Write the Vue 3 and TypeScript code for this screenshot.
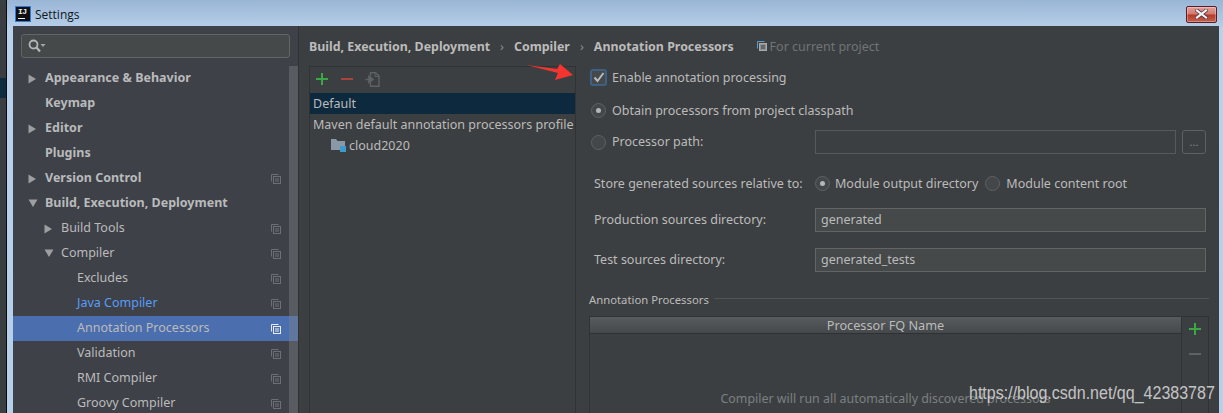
<script setup lang="ts">
interface TreeRow {
  label: string
  level: number
  arrow?: 'right' | 'down'
  bold?: boolean
  copy?: boolean
  link?: boolean
  selected?: boolean
}

const rows: TreeRow[] = [
  { label: 'Appearance & Behavior', level: 0, arrow: 'right', bold: true },
  { label: 'Keymap', level: 0, bold: true },
  { label: 'Editor', level: 0, arrow: 'right', bold: true },
  { label: 'Plugins', level: 0, bold: true },
  { label: 'Version Control', level: 0, arrow: 'right', bold: true, copy: true },
  { label: 'Build, Execution, Deployment', level: 0, arrow: 'down', bold: true },
  { label: 'Build Tools', level: 1, arrow: 'right', copy: true },
  { label: 'Compiler', level: 1, arrow: 'down', copy: true },
  { label: 'Excludes', level: 2, copy: true },
  { label: 'Java Compiler', level: 2, copy: true, link: true },
  { label: 'Annotation Processors', level: 2, copy: true, selected: true },
  { label: 'Validation', level: 2, copy: true },
  { label: 'RMI Compiler', level: 2, copy: true },
  { label: 'Groovy Compiler', level: 2, copy: true }
]
</script>

<template>
  <div class="screen">
    <div class="desk"><span class="desk-patch"></span></div>
    <div class="window">
      <header class="titlebar">
        <div class="logo"><span class="logo-text">IJ</span><span class="logo-bar"></span></div>
        <span class="title">Settings</span>
        <button class="close" type="button" aria-label="Close">
          <svg width="13" height="10" viewBox="0 0 13 10">
            <path d="M2 1.5 L11 8.5 M11 1.5 L2 8.5" stroke="#4a3a44" stroke-width="3.6" stroke-linecap="square" />
            <path d="M2 1.5 L11 8.5 M11 1.5 L2 8.5" stroke="#f4f4f6" stroke-width="2.2" stroke-linecap="square" />
          </svg>
        </button>
      </header>

      <div class="client">
        <aside class="sidebar">
          <div class="search-wrap">
            <div class="search">
              <svg width="20" height="16" viewBox="0 0 20 16">
                <circle cx="6.5" cy="6.5" r="4" fill="none" stroke="#b4b6b7" stroke-width="1.8" />
                <path d="M9.5 9.5 L13 13.5" stroke="#b4b6b7" stroke-width="2.2" />
                <path d="M13.5 6 H18.5 L16 9 Z" fill="#a3a5a6" />
              </svg>
            </div>
          </div>
          <div class="tree">
            <div
              v-for="row in rows"
              :key="row.label"
              class="tree-row"
              :class="['lvl-' + row.level, { selected: row.selected }]"
            >
              <span class="arrow-slot">
                <svg v-if="row.arrow === 'right'" width="9" height="10" viewBox="0 0 9 10"><path d="M0.5 0.5 L8 5 L0.5 9.5 Z" fill="#9c9e9f" /></svg>
                <svg v-else-if="row.arrow === 'down'" width="10" height="9" viewBox="0 0 10 9"><path d="M0.5 0.5 H9.5 L5 8 Z" fill="#9c9e9f" /></svg>
              </span>
              <span class="tree-label" :class="{ bold: row.bold, link: row.link }">{{ row.label }}</span>
              <svg v-if="row.copy" class="copy" width="10" height="10" viewBox="0 0 10 10">
                <g fill="none" :stroke="row.selected ? '#e6ebf4' : '#6d7073'" stroke-width="1">
                  <path d="M0.5 7.5 V0.5 H7.5" />
                  <rect x="2.5" y="2.5" width="7" height="7" />
                  <path d="M4 5 H8 M4 7 H8" />
                </g>
              </svg>
            </div>
            <div class="scrollbar"></div>
          </div>
        </aside>

        <main class="main">
          <nav class="crumbs">
            <span class="crumb">Build, Execution, Deployment</span>
            <span class="sep">›</span>
            <span class="crumb">Compiler</span>
            <span class="sep">›</span>
            <span class="crumb">Annotation Processors</span>
            <span class="scope">
              <svg width="10" height="10" viewBox="0 0 10 10">
                <path d="M0.5 7.5 V0.5 H7.5" fill="none" stroke="#5d9bd0" />
                <rect x="2.5" y="2.5" width="7" height="7" fill="#8d9093" stroke="#a8abad" />
                <path d="M4 5 H8 M4 7 H8" stroke="#3c3f41" />
              </svg>
              For current project
            </span>
          </nav>

          <div class="content">
            <section class="profiles">
              <div class="profile-tools">
                <svg width="12" height="12" viewBox="0 0 12 12"><path d="M6 0 V12 M0 6 H12" stroke="#3aa745" stroke-width="2" /></svg>
                <svg width="12" height="12" viewBox="0 0 12 12"><path d="M0 6 H12" stroke="#a8443c" stroke-width="2" /></svg>
                <svg width="15" height="15" viewBox="0 0 15 15">
                  <path d="M5.5 4.5 V0.8 H10.5 L14 4 V14.2 H5.5 V10.5" fill="none" stroke="#5f6264" stroke-width="1.4" />
                  <path d="M10 0.8 V4.5 H14" fill="none" stroke="#5f6264" />
                  <path d="M0.5 7.5 H5.5 M4 4.5 L8 7.5 L4 10.5 Z" fill="#5f6264" stroke="#5f6264" stroke-width="1.6" />
                </svg>
              </div>
              <div class="profile-row active">Default</div>
              <div class="profile-row">Maven default annotation processors profile</div>
              <div class="profile-row nested">
                <svg width="15" height="13" viewBox="0 0 15 13">
                  <path d="M0 0 H5 L6.5 2 H14 V11 H0 Z" fill="#8a98a7" />
                  <rect x="9" y="7" width="6" height="6" fill="#3d9bc9" />
                </svg>
                cloud2020
              </div>
            </section>

            <section class="form">
              <div class="line enable">
                <span class="checkbox">
                  <svg width="12" height="11" viewBox="0 0 12 11"><path d="M1.5 5.5 L4.5 9 L10.5 1" fill="none" stroke="#b9bbbc" stroke-width="2" /></svg>
                </span>
                <span class="txt">Enable annotation processing</span>
              </div>
              <div class="line obtain">
                <span class="radio on"></span>
                <span class="txt">Obtain processors from project classpath</span>
              </div>
              <div class="line path">
                <span class="radio"></span>
                <span class="txt path-label">Processor path:</span>
                <div class="field disabled"></div>
                <div class="browse">...</div>
              </div>
              <div class="line store">
                <span class="txt store-label">Store generated sources relative to:</span>
                <span class="radio on"></span>
                <span class="txt opt">Module output directory</span>
                <span class="radio"></span>
                <span class="txt">Module content root</span>
              </div>
              <div class="line prod">
                <span class="txt store-label">Production sources directory:</span>
                <div class="field wide">generated</div>
              </div>
              <div class="line test">
                <span class="txt store-label">Test sources directory:</span>
                <div class="field wide">generated_tests</div>
              </div>
              <div class="group">
                <span>Annotation Processors</span>
                <i class="rule"></i>
              </div>
              <div class="table">
                <div class="table-main">
                  <div class="table-head">Processor FQ Name</div>
                  <div class="table-hint">Compiler will run all automatically discovered processors</div>
                </div>
                <div class="table-tools">
                  <svg width="12" height="12" viewBox="0 0 12 12"><path d="M6 0 V12 M0 6 H12" stroke="#3aa745" stroke-width="2" /></svg>
                  <svg width="12" height="2" viewBox="0 0 12 2"><path d="M0 1 H12" stroke="#5f6264" stroke-width="2" /></svg>
                </div>
              </div>
            </section>
          </div>
        </main>
      </div>
    </div>

    <svg class="callout" width="50" height="20" viewBox="0 0 50 20">
      <path d="M0.5 1 L31 5 L34 0 L47 11 L29 16 L32 9 Z" fill="#f4342f" />
    </svg>
    <span class="watermark">https://blog.csdn.net/qq_42383787</span>
  </div>
</template>

<style>
html, body { margin: 0; padding: 0; background: #3c3f41; }
</style>

<style scoped>
.screen {
  position: relative;
  display: flex;
  width: 1223px;
  height: 413px;
  overflow: hidden;
  font-family: "Noto Sans", "Liberation Sans", sans-serif;
  font-size: 12.5px;
  color: #bbbbbb;
}
.desk {
  width: 7px;
  flex: none;
  padding-top: 78px;
  box-sizing: border-box;
  background: #3b3e40;
  border-right: 1px solid #0c0c0c;
}
.desk-patch { display: block; width: 6px; height: 20px; background: #0d2a3f; }
.window {
  flex: 1;
  min-width: 0;
  display: flex;
  flex-direction: column;
  background: linear-gradient(180deg, #9ab6d6 0, #b9d1ea 30px, #b6cfea 100%);
}
.titlebar {
  height: 26px;
  flex: none;
  display: flex;
  align-items: center;
  padding: 2px 6px 0 8px;
  box-sizing: border-box;
}
.logo {
  width: 16px;
  height: 16px;
  box-sizing: border-box;
  background: #101010;
  border: 1px solid #2a7ce0;
  position: relative;
  flex: none;
  display: flex;
  flex-direction: column;
  align-items: flex-start;
  padding-left: 2px;
}
.logo-text {
  font: bold 8px/9px "Liberation Mono", monospace;
  color: #f2f2f2;
  letter-spacing: -0.5px;
}
.logo-bar { width: 7px; height: 1px; margin-top: 2px; background: #f2f2f2; }
.title {
  margin-left: 4px;
  font-family: "Open Sans", sans-serif;
  font-size: 12px;
  color: #101820;
  flex: 1;
}
.close {
  width: 31px;
  height: 17px;
  padding: 0;
  display: flex;
  align-items: center;
  justify-content: center;
  border: 1px solid #5a1c2c;
  border-radius: 2px;
  background: linear-gradient(180deg, #e0a398 0, #d5776a 48%, #b43a26 52%, #c4604c 100%);
  box-shadow: inset 0 0 0 1px rgba(255, 255, 255, 0.3);
}
.client {
  flex: 1;
  min-height: 0;
  margin-right: 4px;
  margin-left: 6px;
  display: flex;
  background: #3c3f41;
}
.sidebar {
  width: 286px;
  flex: none;
  box-sizing: border-box;
  border-right: 1px solid #323232;
  background: #3e4148;
  display: flex;
  flex-direction: column;
}
.search-wrap { padding: 8px; }
.search {
  height: 24px;
  box-sizing: border-box;
  background: #45494a;
  border: 1px solid #646464;
  border-radius: 3px;
  display: flex;
  align-items: center;
  padding-left: 5px;
}
.tree { position: relative; flex: 1; min-height: 0; }
.tree-row {
  height: 25px;
  display: flex;
  align-items: center;
  box-sizing: border-box;
  padding-right: 17px;
}
.tree-row.selected { background: #4b6eaf; }
.lvl-0 { padding-left: 15px; }
.lvl-1 { padding-left: 31px; }
.lvl-2 { padding-left: 47px; }
.arrow-slot {
  width: 17px;
  flex: none;
  display: flex;
  align-items: center;
}
.tree-label { flex: 1; white-space: nowrap; margin-bottom: 3px; }
.tree-label.bold { font-weight: 700; color: #b9babb; }
.tree-label.link { color: #589df6; }
.scrollbar {
  position: absolute;
  top: 0;
  bottom: 0;
  right: 0;
  width: 9px;
  background: rgba(128, 130, 135, 0.4);
}
.copy { flex: none; }
.main { flex: 1; min-width: 0; display: flex; flex-direction: column; }
.crumbs {
  height: 40px;
  flex: none;
  box-sizing: border-box;
  display: flex;
  align-items: center;
  padding-left: 10px;
  white-space: nowrap;
}
.crumb { font-weight: 700; font-size: 12.4px; }
.sep { margin: 0 10px; color: #8c8e8f; }
.scope {
  margin-left: 23px;
  display: flex;
  align-items: center;
  gap: 3px;
  color: #717476;
}
.content { flex: 1; min-height: 0; display: flex; padding-left: 10px; }
.profiles {
  width: 267px;
  flex: none;
  box-sizing: border-box;
  border: 1px solid #323232;
  border-bottom: 0;
}
.profile-tools {
  height: 26px;
  box-sizing: border-box;
  display: flex;
  align-items: center;
  gap: 13px;
  padding: 0 0 2px 6px;
}
.profile-tools svg:last-child { margin-left: -1px; }
.profile-row {
  height: 21px;
  box-sizing: border-box;
  display: flex;
  align-items: center;
  padding-left: 3px;
  padding-bottom: 1px;
  white-space: nowrap;
}
.profile-row.active { background: #0d293e; }
.profile-row.nested { padding-left: 21px; gap: 3px; }
.form { flex: 1; min-width: 0; padding-left: 13px; padding-right: 10px; }
.line { display: flex; align-items: center; white-space: nowrap; }
.txt { margin-bottom: 2px; }
.enable .txt, .obtain .txt, .store .txt { margin-bottom: 1px; }
.enable { height: 23px; padding-left: 1px; gap: 5px; }
.obtain { height: 23px; margin-top: 10px; padding-left: 2px; gap: 6px; }
.path { height: 24px; margin-top: 8px; padding-left: 2px; }
.path-label { margin-left: 6px; width: 203px; }
.store { height: 23px; margin-top: 18px; padding-left: 5px; }
.prod { height: 24px; margin-top: 13px; padding-left: 5px; }
.test { height: 24px; margin-top: 16px; padding-left: 5px; }
.store-label { width: 221px; flex: none; }
.opt { margin-right: 7px; }
.checkbox {
  width: 17px;
  height: 17px;
  flex: none;
  box-sizing: border-box;
  border: 2px solid #3d6185;
  border-radius: 3px;
  background: #45494b;
  display: flex;
  align-items: center;
  justify-content: center;
}
.radio {
  width: 15px;
  height: 15px;
  flex: none;
  box-sizing: border-box;
  border: 1px solid #5f6264;
  border-radius: 50%;
  background: #43474a;
  display: flex;
  align-items: center;
  justify-content: center;
}
.store .radio { margin-right: 6px; }
.store .radio.on { margin-right: 5px; }
.radio.on::after {
  content: "";
  width: 5px;
  height: 5px;
  border-radius: 50%;
  background: #b4b6b7;
}
.field {
  height: 24px;
  box-sizing: border-box;
  display: flex;
  align-items: center;
  padding: 0 0 2px 5px;
  border: 1px solid #646464;
  background: #45494a;
}
.field.disabled {
  width: 361px;
  flex: none;
  background: #3c3f41;
  border-color: #565859;
}
.field.wide { width: 391px; flex: none; }
.browse {
  width: 24px;
  height: 24px;
  margin-left: 6px;
  flex: none;
  box-sizing: border-box;
  border: 1px solid #5e6163;
  border-radius: 3px;
  text-align: center;
  font-size: 11px;
  line-height: 22px;
  color: #85888a;
}
.group {
  height: 16px;
  margin-top: 19px;
  display: flex;
  align-items: center;
  gap: 5px;
  font-size: 11.3px;
  white-space: nowrap;
}
.rule { flex: 1; height: 1px; background: #515355; margin-top: -2px; }
.table {
  margin-top: 9px;
  height: 110px;
  box-sizing: border-box;
  display: flex;
  border: 1px solid #323232;
}
.table-main { flex: 1; min-width: 0; }
.table-head {
  height: 16px;
  display: flex;
  align-items: center;
  justify-content: center;
  font-size: 12.7px;
  background: linear-gradient(180deg, #575b5d, #45494b);
  border-bottom: 1px solid #2f3132;
}
.table-hint {
  margin-top: 56px;
  text-align: center;
  font-size: 12.4px;
  color: #7c7f81;
  white-space: nowrap;
}
.table-tools {
  width: 26px;
  flex: none;
  border-left: 1px solid #323232;
  display: flex;
  flex-direction: column;
  align-items: center;
  padding-top: 6px;
  gap: 18px;
}
.callout { position: absolute; left: 526px; top: 64px; }
.watermark {
  position: absolute;
  left: 969px;
  top: 381px;
  font-family: "Liberation Sans", sans-serif;
  font-size: 18px;
  line-height: 24px;
  color: rgba(232, 232, 232, 0.8);
  white-space: nowrap;
  transform: scaleX(0.89);
  transform-origin: left center;
}
</style>
